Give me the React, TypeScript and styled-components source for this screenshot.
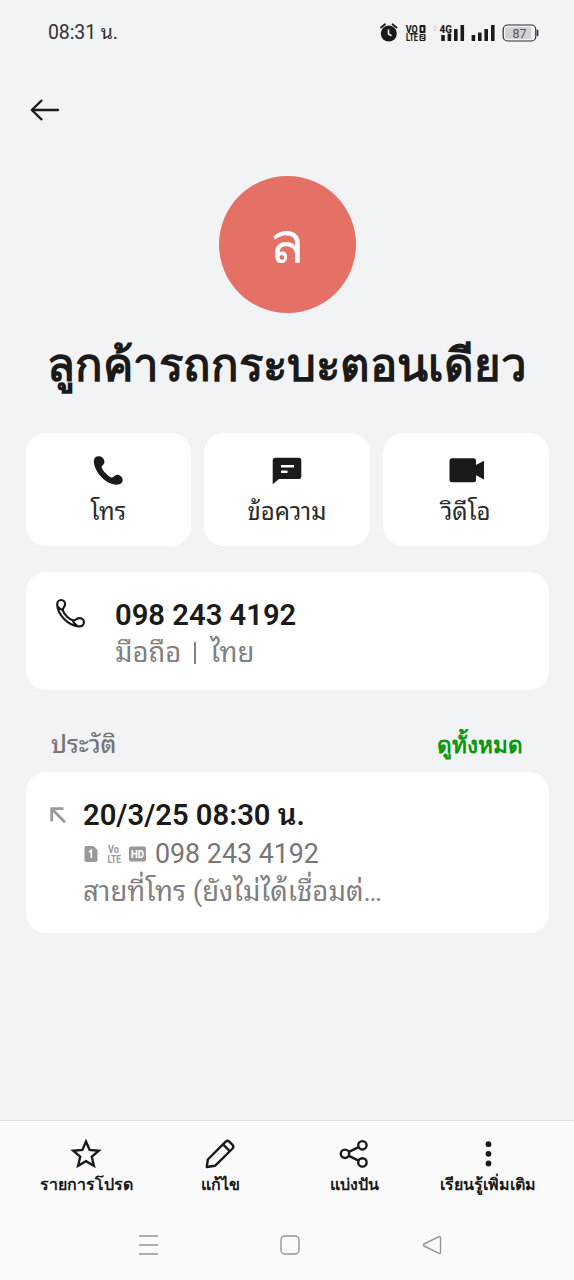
import React from 'react';
import styled, { createGlobalStyle } from 'styled-components';

const ink = '#1a1a1a';
const muted = '#767676';
const looped = 'Roboto, "Noto Sans Thai Looped", sans-serif';

const GlobalStyle = createGlobalStyle`
  * { box-sizing: border-box; }
  body { margin: 0; background: #f2f3f5; font-family: Roboto, sans-serif; color: ${ink}; }
  svg { display: block; flex: none; }
`;

const Screen = styled.div`
  display: flex;
  flex-direction: column;
  width: 574px;
  height: 1280px;
  background: #f2f3f5;
  overflow: hidden;
`;

const StatusBar = styled.header`
  display: flex;
  align-items: center;
  justify-content: space-between;
  height: 65px;
  padding: 0 35px 0 48px;
`;

const Clock = styled.span`
  font-family: ${looped};
  font-size: 19.5px;
  line-height: 24px;
  letter-spacing: -0.1px;
  color: #303133;
`;

const TopBar = styled.nav`
  display: flex;
  align-items: center;
  height: 90px;
  padding: 0 0 0 30px;
`;

const Profile = styled.section`
  display: flex;
  flex-direction: column;
  align-items: center;
  height: 277.5px;
  padding-top: 21.4px;
`;

const Avatar = styled.div`
  display: flex;
  align-items: center;
  justify-content: center;
  width: 137px;
  height: 137px;
  padding-bottom: 4px;
  border-radius: 50%;
  background: #e57066;
  color: #fff;
  font-size: 58px;
  line-height: 70px;
`;

const Name = styled.h1`
  margin: 18px 0 0;
  font-size: 45.5px;
  line-height: 70px;
  font-weight: 700;
  white-space: nowrap;
`;

const Actions = styled.div`
  display: grid;
  grid-template-columns: repeat(3, 1fr);
  gap: 13px;
  padding: 0 25.5px;
`;

const ActionCard = styled.button`
  display: flex;
  flex-direction: column;
  align-items: center;
  height: 113.5px;
  padding: 20.5px 0 0;
  border: 0;
  border-radius: 20px;
  background: #fff;
  color: ${ink};
  font-family: ${looped};
`;

const ActionLabel = styled.span`
  margin-top: 5px;
  font-size: 24px;
  line-height: 37px;
  font-weight: 400;
  color: #2a2a2a;
`;

const Card = styled.section<{ $height: number }>`
  display: flex;
  height: ${p => p.$height}px;
  margin: 0 25.5px;
  border-radius: 20px;
  background: #fff;
`;

const PhoneCard = styled(Card)`
  gap: 29px;
  margin-top: 25.5px;
  padding: 25px 29.5px;
`;

const Lines = styled.div`
  display: flex;
  flex-direction: column;
  font-family: ${looped};
  white-space: nowrap;
`;

const Strong = styled.div`
  font-size: 29.2px;
  line-height: 37px;
  font-weight: 600;
`;

const Sub = styled.div<{ $thai?: boolean }>`
  display: flex;
  align-items: center;
  font-size: ${p => (p.$thai ? 27.5 : 26.8)}px;
  line-height: 38px;
  font-weight: 400;
  color: ${p => (p.$thai ? '#808080' : muted)};
`;

const Divider = styled.span`
  width: 2px;
  height: 22px;
  margin: 0 14px 0 13px;
  background: #808080;
`;

const SectionHead = styled.div`
  display: flex;
  align-items: center;
  justify-content: space-between;
  height: 81.5px;
  padding: 28px 51px 0;
`;

const SectionTitle = styled.h2`
  margin: 0;
  font-family: ${looped};
  font-size: 24.4px;
  line-height: 34px;
  font-weight: 500;
  color: ${muted};
`;

const SeeAll = styled.a`
  font-size: 22.5px;
  line-height: 34px;
  font-weight: 700;
  color: #07980c;
`;

const HistoryCard = styled(Card)`
  gap: 16px;
  padding: 25.5px 23.5px;
  svg.direction { margin-top: 9px; }
`;

const HistoryDetail = styled.div`
  margin-top: 1px;
`;

const Badges = styled.span`
  display: flex;
  align-items: center;
  margin-right: 9px;
`;

const Footer = styled.footer`
  display: flex;
  flex-direction: column;
  height: 160px;
  margin-top: auto;
  border-top: 1px solid #e2e3e5;
  background: #fafafa;
`;

const Tabs = styled.div`
  display: grid;
  grid-template-columns: repeat(4, 134px);
  justify-content: center;
  height: 90px;
  padding-top: 16px;
`;

const Tab = styled.div`
  display: flex;
  flex-direction: column;
  align-items: center;
`;

const TabLabel = styled.span`
  margin-top: 2px;
  font-size: 16px;
  line-height: 28px;
  font-weight: 600;
  white-space: nowrap;
`;

const SystemNav = styled.div`
  display: flex;
  align-items: center;
  justify-content: space-between;
  height: 68px;
  padding: 0 131px 0 137px;
`;

const glyph = 'Roboto, sans-serif';

const StatusIcons = () => (
  <svg width="160" height="24" viewBox="379 21 160 24">
    <g fill="none" stroke={ink} strokeWidth="1.8" strokeLinecap="round">
      <path d="M381 27.500l4-3.200M396.500 27.500l-4-3.200" />
    </g>
    <circle cx="388.800" cy="33.500" r="8" fill={ink} />
    <path d="M388.500 29.500v4.500l3 1.800" fill="none" stroke="#f2f3f5" strokeWidth="1.600" />
    <g fontFamily={glyph} fontWeight="800" fontSize="10.500" fill={ink}>
      <text x="405.800" y="32.600" textLength="12" lengthAdjust="spacingAndGlyphs">VO</text>
      <text x="406" y="41" textLength="12" lengthAdjust="spacingAndGlyphs">LTE</text>
      <text x="439.500" y="32.500" fontSize="11.500" textLength="12.500" lengthAdjust="spacingAndGlyphs">4G</text>
    </g>
    <rect x="419.500" y="25" width="6" height="8" rx="1" fill={ink} />
    <rect x="421.500" y="27" width="1.800" height="4" fill="#f2f3f5" />
    <rect x="419.500" y="34" width="6" height="7" rx="1" fill={ink} />
    <path d="M420.800 35.500h3v2h-2.600v2h3" fill="none" stroke="#f2f3f5" strokeWidth=".9" />
    <path d="M433 27.500l2-2 2 2zM433 29l2 2 2-2z" fill="#cfd0d2" />
    <g fill={ink}>
      <rect x="441.200" y="35" width="3.600" height="6" rx=".6" />
      <rect x="447.600" y="33.500" width="3.600" height="7.500" rx=".6" />
      <rect x="454" y="29" width="3.600" height="12" rx=".6" />
      <rect x="460.500" y="25" width="3.600" height="16" rx=".6" />
      <rect x="471.600" y="35" width="3.600" height="6" rx=".6" />
      <rect x="478" y="32.500" width="3.600" height="8.500" rx=".6" />
      <rect x="484.400" y="29" width="3.600" height="12" rx=".6" />
      <rect x="491" y="25" width="3.600" height="16" rx=".6" />
    </g>
    <rect x="503.200" y="25" width="32.600" height="16" rx="4.500" fill="none" stroke="#2b2b2b" strokeWidth="1.200" />
    <path d="M507 27h24v12h-24q-2 0-2-2v-8q0-2 2-2z" fill="#d2d2d3" />
    <path d="M537.600 30.500v5" stroke="#2b2b2b" strokeWidth="1.500" strokeLinecap="round" />
    <text x="512.500" y="37.700" fontFamily={glyph} fontSize="13" fill="#555" textLength="14" lengthAdjust="spacingAndGlyphs">87</text>
  </svg>
);

const BackIcon = () => (
  <svg width="30" height="24" viewBox="0 0 30 24" fill="none" stroke={ink} strokeWidth="2.300" strokeLinecap="round" strokeLinejoin="round">
    <path d="M28 12H2M11.500 2.700L1.800 12l9.700 9.300" />
  </svg>
);

const CallFilled = () => (
  <svg width="36" height="36" viewBox="0 0 36 36">
    <path d="M3.800 8.300C3.800 5.200 5.700 3.300 8.800 3.300c3.300 0 5.600 2.700 5.600 5.800 0 2.600-3.200 3.600-2.700 5.700.7 2.600 6.600 8.600 9.300 9.700 2.300.8 3.400-2.700 6.200-2.700 3.100 0 5.500 2.600 5.500 5.300 0 3-2.800 4.700-6.200 4.600C15.500 31.500 4.100 18.800 3.800 8.300z" fill={ink} />
  </svg>
);

const MessageFilled = () => (
  <svg width="36" height="36" viewBox="0 0 36 36">
    <path d="M6.200 4.800h23.600q2.500 0 2.500 2.500v16.200q0 2.500-2.500 2.500H10L3.700 31.300V7.300q0-2.500 2.500-2.500z" fill={ink} />
    <path d="M12 13.300h13M12 18.800h6.500" stroke="#fff" strokeWidth="2.500" />
  </svg>
);

const VideoFilled = () => (
  <svg width="36" height="36" viewBox="0 0 36 36">
    <path d="M4 5.300h21.500q2.500 0 2.500 2.500v4.200l8-4.200v18.600l-8-4.200v4.600q0 2.500-2.500 2.500H4Q1.500 29.300 1.500 26.800v-19Q1.500 5.300 4 5.300z" fill={ink} />
  </svg>
);

const CallOutline = () => (
  <svg width="31" height="32" viewBox="0 0 31 32">
    <path d="M2.200 7.200C2.200 4.700 3.900 3 6.100 3c2.400 0 4 1.900 4 4.200 0 2.700-2.900 3.700-2.200 6.300 1 3.700 6.300 9 9.900 9.800 2.700.5 3.700-2.100 6.500-2.100 2.600 0 4.700 1.700 4.700 4.100 0 2.600-2.200 4.100-4.700 4C13.200 29.200 2.400 17.200 2.200 7.200zM2.800 9.800c1.500 1.700 3.600 2.900 5 3.200M17.600 23.300c1 2.300 2.600 4.400 4.500 5.500" fill="none" stroke={ink} strokeWidth="2.200" strokeLinecap="round" strokeLinejoin="round" />
  </svg>
);

const OutgoingIcon = () => (
  <svg className="direction" width="18" height="18" viewBox="0 0 18 18" fill="none" stroke="#9a9a9a" strokeWidth="2.800">
    <path d="M14.500 2.700H2.700V15.500M2.700 2.700L16 16.200" />
  </svg>
);

const CallBadges = () => (
  <Badges>
    <svg width="63" height="24" viewBox="83 841 63 24">
      <path d="M86.500 845h7l4 4v10q0 2-2 2h-9q-2 0-2-2v-12q0-2 2-2z" fill="#999" />
      <path d="M89 851l2.300-1.800v7.800" fill="none" stroke="#fff" strokeWidth="1.700" />
      <g fontFamily={glyph} fontWeight="700" fontSize="10.500" fill="#999">
        <text x="108" y="852.200" textLength="11" lengthAdjust="spacingAndGlyphs">Vo</text>
        <text x="107.500" y="861.500" textLength="13.500" lengthAdjust="spacingAndGlyphs">LTE</text>
      </g>
      <rect x="129" y="845.500" width="17" height="15" rx="2" fill="#999" />
      <text x="131" y="857" fontFamily={glyph} fontWeight="800" fontSize="11" fill="#fff" textLength="13" lengthAdjust="spacingAndGlyphs">HD</text>
    </svg>
  </Badges>
);

const tabIcons = {
  star: <path d="M16 4.500l3.600 8.400 9.200.8-7 6 2.100 9L16 24.100l-7.900 4.600 2.100-9-7-6 9.200-.8z" strokeLinejoin="miter" />,
  edit: <path d="M2.800 30l1-7.500L21.700 4.600q1.800-1.500 3.600 0l3.300 3.300q1.500 1.800 0 3.600L11 28.800zM19 7.300l6.800 6.800" />,
  share: (
    <>
      <circle cx="7" cy="16.800" r="4.200" />
      <circle cx="24.400" cy="8.300" r="4.200" />
      <circle cx="24.400" cy="25.400" r="4.200" />
      <path d="M10.900 14.900l9.700-4.800M10.900 18.900l9.700 4.700" />
    </>
  ),
  more: (
    <g fill={ink} stroke="none">
      <circle cx="16.500" cy="7.200" r="2.900" />
      <circle cx="16.500" cy="16.800" r="2.900" />
      <circle cx="16.500" cy="26.500" r="2.900" />
    </g>
  ),
};

const tabs: { icon: keyof typeof tabIcons; label: string }[] = [
  { icon: 'star', label: 'รายการโปรด' },
  { icon: 'edit', label: 'แก้ไข' },
  { icon: 'share', label: 'แบ่งปัน' },
  { icon: 'more', label: 'เรียนรู้เพิ่มเติม' },
];

const actions = [
  { icon: <CallFilled />, label: 'โทร' },
  { icon: <MessageFilled />, label: 'ข้อความ' },
  { icon: <VideoFilled />, label: 'วิดีโอ' },
];

export default function App() {
  return (
    <Screen>
      <GlobalStyle />
      <StatusBar>
        <Clock>08:31 น.</Clock>
        <StatusIcons />
      </StatusBar>
      <TopBar><BackIcon /></TopBar>
      <Profile>
        <Avatar>ล</Avatar>
        <Name>ลูกค้ารถกระบะตอนเดียว</Name>
      </Profile>
      <Actions>
        {actions.map(a => (
          <ActionCard key={a.label}>
            {a.icon}
            <ActionLabel>{a.label}</ActionLabel>
          </ActionCard>
        ))}
      </Actions>
      <PhoneCard $height={118.5}>
        <CallOutline />
        <Lines>
          <Strong>098 243 4192</Strong>
          <Sub $thai>มือถือ<Divider />ไทย</Sub>
        </Lines>
      </PhoneCard>
      <SectionHead>
        <SectionTitle>ประวัติ</SectionTitle>
        <SeeAll>ดูทั้งหมด</SeeAll>
      </SectionHead>
      <HistoryCard $height={161.5}>
        <OutgoingIcon />
        <Lines>
          <Strong>20/3/25 08:30 น.</Strong>
          <HistoryDetail>
            <Sub><CallBadges />098 243 4192</Sub>
            <Sub $thai>สายที่โทร (ยังไม่ได้เชื่อมต่…</Sub>
          </HistoryDetail>
        </Lines>
      </HistoryCard>
      <Footer>
        <Tabs>
          {tabs.map(t => (
            <Tab key={t.label}>
              <svg width="32" height="32" viewBox="0 0 32 32" fill="none" stroke={ink} strokeWidth="2.400" strokeLinejoin="round">
                {tabIcons[t.icon]}
              </svg>
              <TabLabel>{t.label}</TabLabel>
            </Tab>
          ))}
        </Tabs>
        <SystemNav>
          <svg width="22" height="22" viewBox="0 0 22 22" stroke="#949494" strokeWidth="1.700"><path d="M2 2h19M2 11h19M2 20h19" /></svg>
          <svg width="22" height="22" viewBox="0 0 22 22" fill="none" stroke="#949494" strokeWidth="1.400"><rect x="2" y="2" width="18" height="18" rx="4" /></svg>
          <svg width="22" height="22" viewBox="0 0 22 22" fill="none" stroke="#949494" strokeWidth="1.400" strokeLinejoin="round"><path d="M18 2.600L3 10q-1.200 1 0 2l15 7.400q1.500.4 1.500-1.200V3.800q0-1.600-1.500-1.200z" /></svg>
        </SystemNav>
      </Footer>
    </Screen>
  );
}
